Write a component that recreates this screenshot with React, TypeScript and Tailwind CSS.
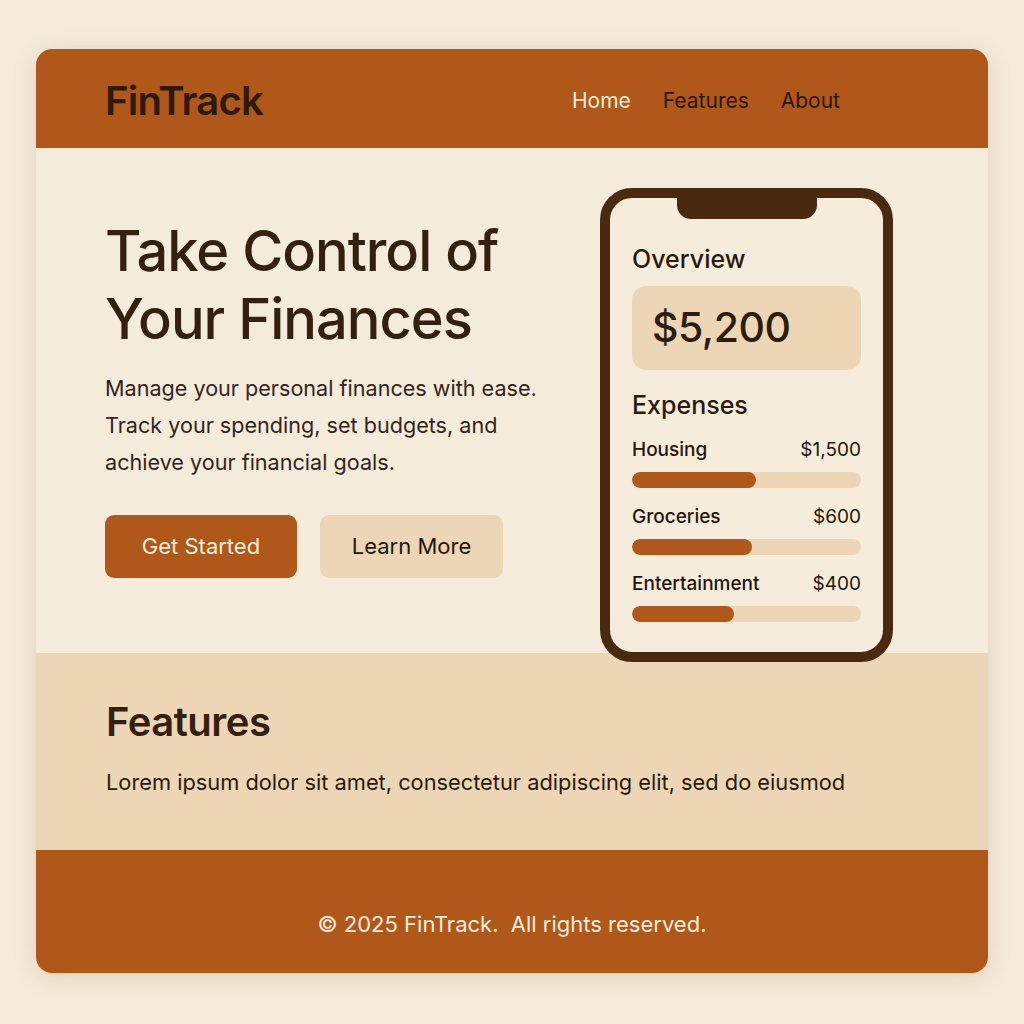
import React from 'react'

const expenses = [
  { name: 'Housing', amount: '$1,500', pct: 54 },
  { name: 'Groceries', amount: '$600', pct: 52.5 },
  { name: 'Entertainment', amount: '$400', pct: 44.5 },
]

function Phone() {
  return (
    <div className="relative z-10 mt-[40px] w-[293px] h-[474px] rounded-[32px] border-[10px] border-[#4a2a0f] bg-[#f6ecdc]">
      {/* Notch */}
      <div className="absolute left-1/2 top-0 -translate-x-1/2 w-[140px] h-[21px] rounded-b-[14px] bg-[#4a2a0f]" />
      <div className="px-[22px] pt-[46px]">
        <div className="text-[25px] leading-[30px] font-medium text-[#2a1a0c]">Overview</div>
        <div className="mt-[12px] h-[84px] rounded-[14px] bg-[#edd6b6] flex items-center px-[20px]">
          <span className="text-[41px] font-medium text-[#2e1c0c] tracking-[-0.5px]">$5,200</span>
        </div>
        <div className="mt-[20px] text-[25px] leading-[30px] font-medium text-[#2a1a0c]">Expenses</div>
        <div className="mt-[18px] flex flex-col gap-[17px]">
          {expenses.map((e) => (
            <div key={e.name}>
              <div className="flex justify-between items-center text-[19px] leading-[24px] text-[#22160a]">
                <span className="font-medium">{e.name}</span>
                <span>{e.amount}</span>
              </div>
              <div className="mt-[10px] h-[16px] rounded-full bg-[#edd6b6] overflow-hidden">
                <div className="h-full rounded-full bg-[#b0571a]" style={{ width: `${e.pct}%` }} />
              </div>
            </div>
          ))}
        </div>
      </div>
    </div>
  )
}

export default function App() {
  return (
    <div
      className="min-h-screen bg-[#f5eadb] pt-[49px] pb-[51px]"
      style={{ fontFamily: 'Inter, "Noto Sans", sans-serif' }}
    >
      <div className="mx-[36px] rounded-[16px] overflow-visible shadow-[0_4px_24px_rgba(120,70,20,0.15)]">
        {/* Header */}
        <header className="h-[99px] rounded-t-[16px] bg-[#b0571a] flex items-center justify-between pt-[5px] pl-[69px] pr-[148px]">
          <div className="text-[40px] font-semibold text-[#2e1a0a] tracking-[-0.8px]">FinTrack</div>
          <nav className="flex items-center gap-[32px] text-[21px]">
            <span className="text-[#fbeedd]">Home</span>
            <span className="text-[#2a1608]">Features</span>
            <span className="text-[#2a1608]">About</span>
          </nav>
        </header>

        {/* Hero */}
        <section className="h-[505px] bg-[#f5ebdb] flex justify-between pl-[69px] pr-[95px]">
          <div className="pt-[69px]">
            <h1 className="text-[56px] leading-[68px] font-medium text-[#33200e] tracking-[-1px]">
              Take Control of
              <br />
              Your Finances
            </h1>
            <p className="mt-[17px] text-[21.6px] leading-[37px] text-[#33241a] w-[450px]">
              Manage your personal finances with ease. Track your spending, set budgets, and achieve your financial goals.
            </p>
            <div className="mt-[34px] flex gap-[23px]">
              <button className="w-[192px] h-[63px] rounded-[9px] bg-[#b0571a] text-[22px] text-[#fbeedd]">
                Get Started
              </button>
              <button className="w-[183px] h-[63px] rounded-[9px] bg-[#edd6b6] text-[22px] text-[#22160a]">
                Learn More
              </button>
            </div>
          </div>
          <Phone />
        </section>

        {/* Features */}
        <section className="h-[197px] bg-[#edd6b6] pl-[70px] pt-[44px]">
          <h2 className="text-[40px] leading-[50px] font-semibold text-[#33200e] tracking-[-0.5px]">Features</h2>
          <p className="mt-[20px] text-[21.8px] leading-[30px] text-[#2a1a0c]">
            Lorem ipsum dolor sit amet, consectetur adipiscing elit, sed do eiusmod
          </p>
        </section>

        {/* Footer */}
        <footer className="h-[123px] rounded-b-[16px] bg-[#b0571a] flex items-center justify-center pt-[26px]">
          <span className="text-[22px] text-[#fbeedd]">© 2025 FinTrack.&nbsp; All rights reserved.</span>
        </footer>
      </div>
    </div>
  )
}
